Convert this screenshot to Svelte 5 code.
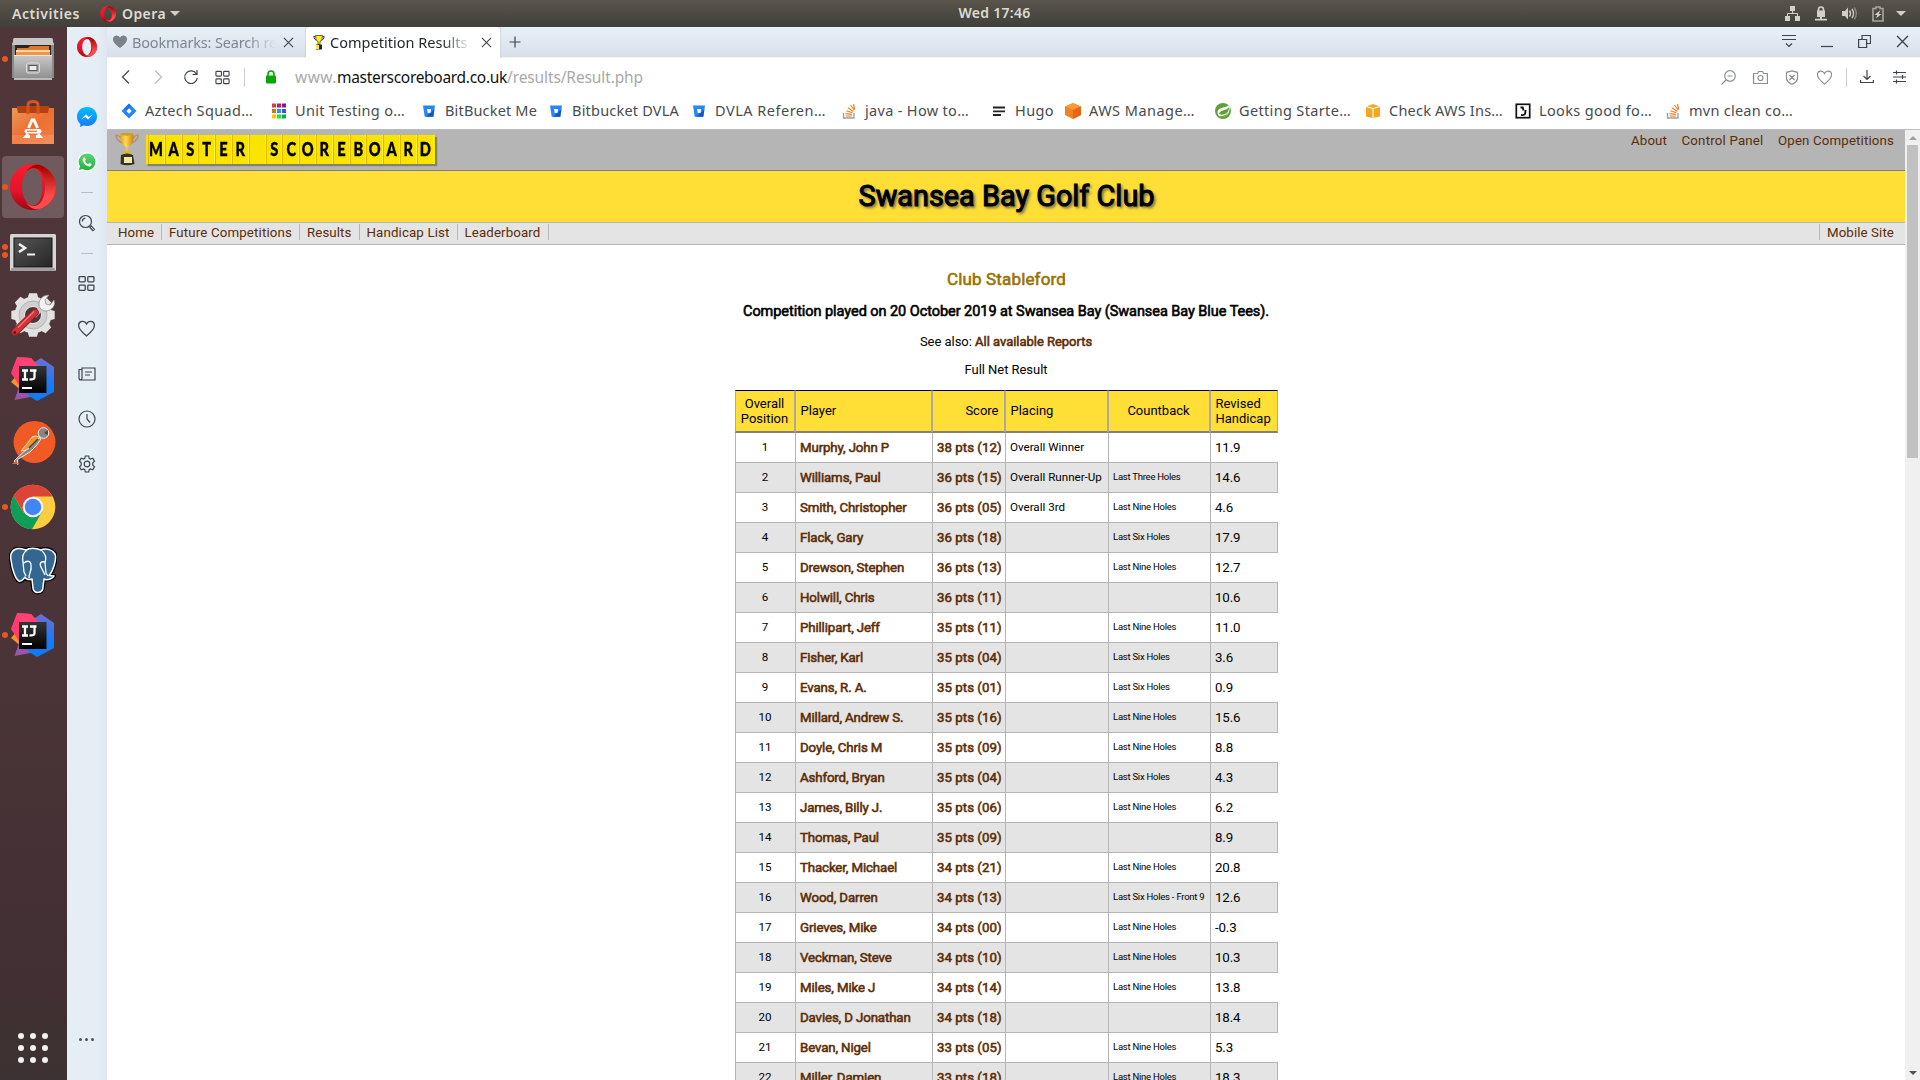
<script>
  // Tracks a label out or in so that it fills its given width.
  function fit(node, width) {
    const natural = node.getBoundingClientRect().width;
    const count = node.textContent.length;
    if (count > 0) node.style.letterSpacing = `${(width - natural) / count}px`;
  }

  const dock = [
    { icon: 'files', dots: 1 },
    { icon: 'store', dots: 0 },
    { icon: 'opera', dots: 1, active: true },
    { icon: 'terminal', dots: 2 },
    { icon: 'settings', dots: 0 },
    { icon: 'idea', dots: 0 },
    { icon: 'postman', dots: 0 },
    { icon: 'chrome', dots: 1 },
    { icon: 'postgres', dots: 0 },
    { icon: 'idea', dots: 1 }
  ];

  const bookmarks = [
    { icon: 'jira', label: 'Aztech Squad…', slot: 150, text: 108 },
    { icon: 'tiles', label: 'Unit Testing o…', slot: 150, text: 110 },
    { icon: 'bucket', label: 'BitBucket Me', slot: 127, text: 92 },
    { icon: 'bucket', label: 'Bitbucket DVLA', slot: 143, text: 107 },
    { icon: 'bucket', label: 'DVLA Referen…', slot: 150, text: 111 },
    { icon: 'stack', label: 'java - How to…', slot: 150, text: 104 },
    { icon: 'hugo', label: 'Hugo', slot: 74, text: 39 },
    { icon: 'aws', label: 'AWS Manage…', slot: 150, text: 106 },
    { icon: 'spring', label: 'Getting Starte…', slot: 150, text: 112 },
    { icon: 'box', label: 'Check AWS Ins…', slot: 150, text: 114 },
    { icon: 'looks', label: 'Looks good fo…', slot: 150, text: 113 },
    { icon: 'stack', label: 'mvn clean co…', slot: 150, text: 104 }
  ];

  const nav = [
    ['Home', 36],
    ['Future Competitions', 123],
    ['Results', 44.5],
    ['Handicap List', 83],
    ['Leaderboard', 76]
  ];

  const nine = 'Last Nine Holes';
  const six = 'Last Six Holes';
  const rows = [
    ['Murphy, John P', '38 pts (12)', 'Overall Winner', '', '11.9'],
    ['Williams, Paul', '36 pts (15)', 'Overall Runner-Up', 'Last Three Holes', '14.6'],
    ['Smith, Christopher', '36 pts (05)', 'Overall 3rd', nine, '4.6'],
    ['Flack, Gary', '36 pts (18)', '', six, '17.9'],
    ['Drewson, Stephen', '36 pts (13)', '', nine, '12.7'],
    ['Holwill, Chris', '36 pts (11)', '', '', '10.6'],
    ['Phillipart, Jeff', '35 pts (11)', '', nine, '11.0'],
    ['Fisher, Karl', '35 pts (04)', '', six, '3.6'],
    ['Evans, R. A.', '35 pts (01)', '', six, '0.9'],
    ['Millard, Andrew S.', '35 pts (16)', '', nine, '15.6'],
    ['Doyle, Chris M', '35 pts (09)', '', nine, '8.8'],
    ['Ashford, Bryan', '35 pts (04)', '', six, '4.3'],
    ['James, Billy J.', '35 pts (06)', '', nine, '6.2'],
    ['Thomas, Paul', '35 pts (09)', '', '', '8.9'],
    ['Thacker, Michael', '34 pts (21)', '', nine, '20.8'],
    ['Wood, Darren', '34 pts (13)', '', 'Last Six Holes - Front 9', '12.6'],
    ['Grieves, Mike', '34 pts (00)', '', nine, '-0.3'],
    ['Veckman, Steve', '34 pts (10)', '', nine, '10.3'],
    ['Miles, Mike J', '34 pts (14)', '', nine, '13.8'],
    ['Davies, D Jonathan', '34 pts (18)', '', '', '18.4'],
    ['Bevan, Nigel', '33 pts (05)', '', nine, '5.3'],
    ['Miller, Damien', '33 pts (18)', '', nine, '18.3']
  ];
</script>

<svg class="defs" width="0" height="0" aria-hidden="true">
  <defs>
    <linearGradient id="opA" x1="0" y1="0" x2="0" y2="1"><stop offset="0" stop-color="#ff1b2d" /><stop offset=".6" stop-color="#e0142a" /><stop offset="1" stop-color="#a70014" /></linearGradient>
    <linearGradient id="opB" x1="0" y1="0" x2="0" y2="1"><stop offset="0" stop-color="#9c0000" /><stop offset=".7" stop-color="#ff4b4b" /></linearGradient>
    <linearGradient id="steel" x1="0" y1="0" x2="0" y2="1"><stop offset="0" stop-color="#c9c9c9" /><stop offset="1" stop-color="#8c8c8c" /></linearGradient>
    <linearGradient id="bag" x1="0" y1="0" x2="1" y2="1"><stop offset="0" stop-color="#e99a5c" /><stop offset=".5" stop-color="#ee6e30" /><stop offset="1" stop-color="#f07f45" /></linearGradient>
    <linearGradient id="term" x1="0" y1="0" x2="1" y2="1"><stop offset="0" stop-color="#555" /><stop offset="1" stop-color="#262626" /></linearGradient>
    <linearGradient id="msg" x1="0" y1="0" x2="0" y2="1"><stop offset="0" stop-color="#00bfff" /><stop offset="1" stop-color="#1a76ff" /></linearGradient>
    <linearGradient id="wa" x1="0" y1="0" x2="0" y2="1"><stop offset="0" stop-color="#5fd676" /><stop offset="1" stop-color="#23ae3c" /></linearGradient>
    <linearGradient id="ijBlue" x1="0" y1="0" x2="0" y2="1"><stop offset="0" stop-color="#6b6fd0" /><stop offset=".6" stop-color="#1b7af5" /><stop offset="1" stop-color="#087cfa" /></linearGradient>
    <linearGradient id="ijBlack" x1="0" y1="0" x2="0" y2="1"><stop offset="0" stop-color="#353535" /><stop offset="1" stop-color="#000" /></linearGradient>
    <linearGradient id="gold" x1="0" y1="0" x2="1" y2="0"><stop offset="0" stop-color="#e0a010" /><stop offset=".4" stop-color="#ffd85a" /><stop offset="1" stop-color="#c98508" /></linearGradient>
  </defs>
</svg>

{#snippet opera(size)}
  <svg width={size} height={size} viewBox="0 0 46 46">
    <path fill="url(#opA)" fill-rule="evenodd" d="M23 0C10 0 0 10.300 0 23s10 23 23 23 23-10.300 23-23S36 0 23 0zm0 4.500c5.500 0 9.500 8 9.500 18.500S28.500 41.500 23 41.500 12 33.500 12 23 17 4.500 23 4.500z" />
    <path fill="url(#opB)" d="M15.500 8.500C18 5.500 21 4 24 4c6.500 0 11 8.500 11 19s-4.500 19-11 19c-3 0-6-1.500-8.500-4.500C19 43.500 24 46 29 45.200 39 42.500 46 33.500 46 23S39 3.500 29 .8C24 0 19 2.500 15.500 8.500z" />
  </svg>
{/snippet}

{#snippet gridIcon(size)}
  <svg class="line" width={size} height={size} viewBox="0 0 16 16">
    <rect x="1" y="1.500" width="5.800" height="5" rx=".8" /><rect x="9.200" y="1.500" width="5.800" height="5" rx=".8" />
    <rect x="1" y="9.500" width="5.800" height="5" rx=".8" /><rect x="9.200" y="9.500" width="5.800" height="5" rx=".8" />
  </svg>
{/snippet}

{#snippet heartIcon(size)}
  <svg class="line" width={size} height={size} viewBox="0 0 18 18">
    <path d="M9 16C5 12.800 1.500 10 1.500 6.200c0-2.400 1.700-4 3.700-4C7 2.200 8.300 3.300 9 4.800c.7-1.500 2-2.600 3.800-2.600 2 0 3.700 1.600 3.700 4C16.500 10 13 12.800 9 16z" />
  </svg>
{/snippet}

{#snippet cross(size)}
  <svg class="line" width={size} height={size} viewBox="0 0 12 12"><path d="M1 1l10 10M11 1L1 11" /></svg>
{/snippet}

{#snippet dockIcon(name)}
  {#if name === 'files'}
    <svg width="46" height="46" viewBox="0 0 46 46">
      <path d="M3 4q0-2 2-2h36q2 0 2 2v37H3z" fill="#b9b9b9" /><path d="M2 7h42v35H2z" fill="#8a8a8a" />
      <path d="M4 2h38l2 7H2z" fill="#c7c7c7" /><path d="M5 9h36v10H5z" fill="#2b2522" />
      <path d="M7 12h11l2-2h19v9H7z" fill="#e0762c" /><path d="M6 14h34v2H6z" fill="#ffd9a8" /><path d="M6 16h34v3H6z" fill="#f09445" />
      <path d="M4 19h38v25H4z" fill="url(#steel)" /><path d="M4 19h38v1H4zM4 42.500h38v1H4z" fill="#e6e6e6" />
      <rect x="16.500" y="27" width="13" height="10" rx="2" fill="#aaa" stroke="#dedede" /><rect x="19" y="29.500" width="8" height="5" fill="#eee" stroke="#555" />
    </svg>
  {:else if name === 'store'}
    <svg width="46" height="46" viewBox="0 0 46 46">
      <path d="M2 8l5 0v-2h32v2h5v6H2z" fill="#b44211" /><path d="M2 8h5l1 5h30l1-5h5v36H2z" fill="url(#bag)" />
      <path d="M2 35h42v9H2z" fill="#fff" opacity=".13" />
      <path d="M18 14V5q0-3.500 5-3.500T28 5v9" fill="none" stroke="#d9521c" stroke-width="3" />
      <path d="M18.500 28L22 20h2l3.500 8M18 34l-2 2.500h4M28 34l2 2.500h-4" fill="none" stroke="#fff" stroke-width="3" />
      <rect x="14.500" y="29" width="17" height="4.500" rx="2.200" fill="#fff" /><path d="M17 31.200h10" stroke="#ed7336" stroke-width="1.300" />
    </svg>
  {:else if name === 'opera'}
    {@render opera(46)}
  {:else if name === 'terminal'}
    <svg width="46" height="46" viewBox="0 0 46 46">
      <rect x="0" y="6" width="46" height="37" rx="1.500" fill="#d5d5d5" /><rect x="1" y="40" width="44" height="3" fill="#9f9f9f" />
      <rect x="4" y="10" width="38" height="29" fill="url(#term)" stroke="#111" />
      <path d="M9 16l6 4-6 4" fill="none" stroke="#f2f2f2" stroke-width="2.600" /><path d="M17 26.500h8" stroke="#f2f2f2" stroke-width="2" />
    </svg>
  {:else if name === 'settings'}
    <svg width="46" height="46" viewBox="0 0 46 46">
      <g fill="#e2e2e2">
        {#each [0, 45, 90, 135] as angle}<path d="M18 5L19 1.300h8L28 5v36l-1 3.700h-8L18 41z" transform="rotate({angle} 23 23)" />{/each}
        <circle cx="23" cy="23" r="18.500" />
      </g>
      <circle cx="23" cy="23" r="14" fill="#cfcfcf" stroke="#b4b4b4" /><circle cx="23" cy="23" r="8.500" fill="#4b363a" stroke="#eee" />
      <path d="M24 24L35 12" stroke="#c9c9c9" stroke-width="5" />
      <path d="M29 12c0-5 4-9 10-9l-4 5 1 4 4 1 4-5c2 5-2 11-8 11-3 0-7-2-7-6z" fill="#f1f1f1" stroke="#8d8d8d" stroke-width=".8" />
      <path d="M5 40L25 20.500" stroke="#971a20" stroke-width="7.600" stroke-linecap="round" /><path d="M5 40L25 20.500" stroke="#cf3439" stroke-width="5.800" stroke-linecap="round" />
      <path d="M8 35.500L24 19.500" stroke="#f0787b" stroke-width="1.200" /><circle cx="4.800" cy="40.500" r="1.400" fill="#54151a" />
    </svg>
  {:else if name === 'idea'}
    <svg width="46" height="46" viewBox="0 0 46 46">
      <path d="M1 26L13 12l14 24-9 4z" fill="#f59325" /><path d="M4.500 44L12 22l24 16z" fill="#9a56a8" />
      <path d="M1 17L7 1l14 1 12 13-20 20z" fill="#ff3c70" /><path d="M16 12l15-10 13 9v25L27 45 13 36z" fill="url(#ijBlue)" />
      <path d="M7 1l14 1 9 10H10z" fill="#ff4175" /><rect x="9" y="10" width="27.500" height="27" fill="url(#ijBlack)" />
      <path d="M12 14.500h6M12 23.500h6M15 14v10M20 14.500h6.500M24.500 14v7q0 3-5 2.300" fill="none" stroke="#fff" stroke-width="2.300" /><path d="M12 32h10" stroke="#fff" stroke-width="2" />
    </svg>
  {:else if name === 'postman'}
    <svg width="46" height="46" viewBox="0 0 46 46">
      <circle cx="24.500" cy="22" r="21" fill="#f15a24" />
      <path d="M30 17q-5-2-8 0l-6 8-5 6 6-1z" fill="#f7931e" stroke="#ffe4cf" /><path d="M30 17.500l-9 9-7 5L4 41l4 3.500-.5-5L20 32l6-6 5-7z" fill="#8b8b8b" stroke="#e8e8e8" />
      <path d="M19 28l9-9" stroke="#414141" stroke-width="1.600" /><circle cx="33.500" cy="13" r="5.300" fill="#868686" stroke="#ececec" /><path d="M34 13l4-3v5z" fill="#4a4a4a" />
      <path d="M1.500 44l4.500-3 2 3z" fill="#f15a24" />
    </svg>
  {:else if name === 'chrome'}
    <svg width="46" height="46" viewBox="0 0 46 46">
      <circle cx="23" cy="23" r="22.300" fill="#ffcd40" />
      <path d="M42.600 12.500H23L14 18.500 3.700 11.850A22.300 22.300 0 0 1 42.600 12.500z" fill="#db4437" />
      <path d="M3.700 11.850A22.300 22.300 0 0 0 22 45.300L32.500 27 23 33 13.500 28.500z" fill="#0f9d58" />
      <path d="M3.700 11.850L14 29l9-6V12.500H8z" fill="#db4437" />
      <circle cx="23" cy="23" r="10.300" fill="#f4f4f4" /><circle cx="23" cy="23" r="8.200" fill="#4285f4" />
    </svg>
  {:else if name === 'postgres'}
    <svg class="elephant" width="48" height="48" viewBox="0 0 48 48">
      <g stroke-linejoin="round">
        <path d="M17 3C8-1 0 3 2 13c1 8 4 19 8 21 3 1 5-3 6-4 1 3 5 3 7 2l1 9c0 6 10 6 10-1l1-8c4 2 9-1 10-3l-5-.5C44 24 48 12 46 7 43 2 36 1 32 3c-5-2-10-3-15 0z" fill="#336791" stroke="#000" stroke-width="4" />
        <path d="M17 3C8-1 0 3 2 13c1 8 4 19 8 21 3 1 5-3 6-4 1 3 5 3 7 2l1 9c0 6 10 6 10-1l1-8c4 2 9-1 10-3l-5-.5C44 24 48 12 46 7 43 2 36 1 32 3c-5-2-10-3-15 0z" fill="#336791" stroke="#fff" stroke-width="1.500" />
        <path d="M18 3c-4 3-5 8-4 12l1 10 2 4M32 3c4 3 6 7 4 13l1 10 2 3M15 16c3-3 7-2 7 2 1 6-2 7-2 13M36 15c-4-1-6 1-4 5l4 8" fill="none" stroke="#fff" stroke-width="1.300" />
      </g>
    </svg>
  {/if}
{/snippet}

{#snippet mark(name)}
  <svg width="16" height="16" viewBox="0 0 16 16">
    {#if name === 'jira'}
      <path d="M8 .5L15.500 8 8 15.500.5 8z" fill="#2684ff" /><path d="M8 5.300L10.700 8 8 10.700 5.300 8z" fill="#fff" /><path d="M8 .5l2.500 2.500Q8.500 4 8 5.300L5.300 8 3 5.500z" fill="#1868e0" opacity=".6" />
    {:else if name === 'tiles'}
      <path d="M1 .5h4v4H1z" fill="#e03a3a" /><path d="M6 .5h4v4H6z" fill="#cc0f73" /><path d="M11 .5h4v4h-4z" fill="#7b14b8" />
      <path d="M1 6h4v4H1z" fill="#c97816" /><path d="M6 6h4v4H6z" fill="#1ba0d6" /><path d="M11 6h4v4h-4z" fill="#4152e0" />
      <path d="M1 11.500h4v4H1z" fill="#ffc20a" /><path d="M6 11.500h4v4H6z" fill="#2fe01f" /><path d="M11 11.500h4v4h-4z" fill="#0fa958" />
    {:else if name === 'bucket'}
      <path d="M2 2.500h12l-1.700 11.300H3.700z" fill="#2684ff" /><path d="M13.400 6.500l-1.100 7.300H5l4.500-4z" fill="#0a56d0" /><path d="M6 6h4.200l-.7 4H6.700z" fill="#fff" />
    {:else if name === 'stack'}
      <path d="M2.500 10v5h10.500v-5" fill="none" stroke="#9b9ea2" stroke-width="1.300" /><path d="M4.500 13h6.500M4.500 10.700l6.400.7M5.300 7.800l6.100 2M7 4.800l5.300 3.600M9.500 2l3.800 5M12.500 1l1.200 5.500" fill="none" stroke="#f48024" stroke-width="1.200" />
    {:else if name === 'hugo'}
      <path d="M2 4.500h12M2 8.300h12M2 12h8" stroke="#222" stroke-width="1.800" />
    {:else if name === 'aws'}
      <path d="M8 0l8 3.500V12l-8 4-8-4V3.500z" fill="#f58220" /><path d="M0 3.500L8 0l8 3.500L8 7z" fill="#fb9c38" /><path d="M8 7l8-3.500V12l-8 4z" fill="#e8641b" />
    {:else if name === 'spring'}
      <circle cx="8" cy="8" r="8" fill="#5fa134" /><path d="M14.500 1.500C13 5 2.500 3.500 2.500 9c0 2.500 1.500 4 1.500 4 6 2 12-1 10.500-11.500z" fill="#fff" /><path d="M14 4C12 8 5 6.500 4 11c4 2 10.500-.5 10-7zM4 13.300c4 0 7-1 9-4-1 4-5 5.700-9 4z" fill="#5fa134" />
    {:else if name === 'box'}
      <path d="M1 3.500L8 1l7 2.500v10L8 15l-7-1.500z" fill="#f0a81f" /><path d="M1 3.500l7 2 7-2M8 5.500V15" fill="none" stroke="#fff" stroke-width="1.100" />
    {:else if name === 'looks'}
      <rect x="1.300" y="1.300" width="13.400" height="13.400" fill="#fff" stroke="#111" stroke-width="1.700" /><path d="M5.500 4.500h2.200l.8 3M10.500 7l-.3 3.500q-.7 2-4.200 1.500" fill="none" stroke="#111" stroke-width="1.900" />
    {/if}
  </svg>
{/snippet}

<div class="desktop">
  <header class="topbar">
    <div class="left">
      <span class="activities"><span use:fit={68}>Activities</span></span>
      {@render opera(16)}
      <span class="app"><span use:fit={44}>Opera</span></span>
      <i class="caret"></i>
    </div>
    <span class="clock"><span use:fit={72}>Wed 17:46</span></span>
    <div class="tray">
      <svg width="15" height="15" viewBox="0 0 15 15"><path d="M5 0h5v5H5zM0 10h5v5H0zM10 10h5v5h-5z" fill="#d3d0c9" /><path d="M7.500 5v3M2.500 10V7.500h10V10" fill="none" stroke="#d3d0c9" /></svg>
      <svg width="12" height="15" viewBox="0 0 12 15"><path d="M3.500 5V3.500a2.500 2.500 0 0 1 5 0V5" fill="none" stroke="#d3d0c9" stroke-width="1.700" /><path d="M2 4.500h8V11H2zM5 11h2v2H5zM0 12.700h12V14.500H0z" fill="#d3d0c9" /></svg>
      <svg width="15" height="15" viewBox="0 0 15 15"><path d="M0 5h3l3-3.500v12L3 10H0z" fill="#d3d0c9" /><path d="M7.500 4.500q2 3 0 6M10 3q3 4.500 0 9" fill="none" stroke="#d3d0c9" stroke-width="1.400" /><path d="M12.300 1.500q4 6 0 12" fill="none" stroke="#8b8880" stroke-width="1.400" /></svg>
      <svg width="12" height="16" viewBox="0 0 12 16"><path d="M1 2.500h3V1h4v1.500h3v12.500H1z" fill="none" stroke="#aaa79f" stroke-width="1.600" /><path d="M8.500 4L2.500 9h2.800L4 12.500 9.500 8H6.700z" fill="#d3d0c9" /></svg>
      <i class="caret"></i>
    </div>
  </header>

  <div class="workspace">
    <aside class="dock">
      {#each dock as item}
        <div class="launcher" class:active={item.active}>
          <div class="dots">{#each Array(item.dots) as _}<i></i>{/each}</div>
          {@render dockIcon(item.icon)}
        </div>
      {/each}
      <div class="apps">{#each Array(9) as _}<i></i>{/each}</div>
    </aside>

    <nav class="sidebar">
      <div class="slot top">{@render opera(20)}</div>
      <div class="slot">
        <svg width="20" height="20" viewBox="0 0 20 20"><path d="M10 0C4.200 0 0 4.200 0 9.700c0 3 1.300 5.500 3.300 7.200V20l3.100-1.500c1.100.3 2.300.5 3.600.5 5.800 0 10-4.200 10-9.500S15.800 0 10 0z" fill="url(#msg)" /><path d="M4 12.500l5-5.200 2.600 2.600L16 7.300l-5 5.200L8.400 10z" fill="#fff" /></svg>
      </div>
      <div class="slot">
        <svg width="20" height="20" viewBox="0 0 20 20"><path d="M10.200.8A9 9 0 0 0 2.300 14.300L1 19l4.800-1.300A9 9 0 1 0 10.200.8z" fill="url(#wa)" stroke="#fff" stroke-width="1.300" /><path d="M6.200 6c.7-1.200 1.500-1 1.900-.1l.7 1.700-.9 1.300c.8 1.600 1.800 2.500 3.400 3.200l1.100-1.200 2.200 1c.3 1.500-1 2.600-2.500 2.500C8.500 13.800 5.500 10.500 5.700 7.600z" fill="#fff" /></svg>
      </div>
      <hr />
      <div class="slot"><svg class="line" width="18" height="18" viewBox="0 0 18 18"><circle cx="7.500" cy="7.500" r="6" /><path d="M4.300 7.500q0-3 3-3.300" /><path d="M12 12l4 4.500" stroke-width="3.200" /><path d="M12.700 12.700l3 3.200" stroke="#e5ecf5" stroke-width="1" /></svg></div>
      <hr />
      <div class="slot">{@render gridIcon(17)}</div>
      <div class="slot">{@render heartIcon(19)}</div>
      <div class="slot"><svg class="line" width="18" height="16" viewBox="0 0 18 16"><path d="M4 3.500H1V12q0 2 2 2h14V2H4v10q0 2-1.500 2M7 6h7M7 9h5" /></svg></div>
      <div class="slot"><svg class="line" width="18" height="18" viewBox="0 0 18 18"><circle cx="9" cy="9" r="8" /><path d="M9 4v5l3 3.500" /></svg></div>
      <div class="slot"><svg class="line" width="18" height="18" viewBox="0 0 18 18"><circle cx="9" cy="9" r="2.800" /><path d="M7.300 1h3.400l.5 2.300 1.300.8 2.300-.8 1.700 2.900L14.800 7.800v2.400l1.700 1.600-1.700 2.900-2.300-.8-1.300.8-.5 2.300H7.300l-.5-2.300-1.300-.8-2.300.8-1.700-2.900 1.700-1.600V7.800L1.500 6.200l1.700-2.900 2.300.8 1.300-.8z" /></svg></div>
      <div class="more"><i></i><i></i><i></i></div>
    </nav>

    <main class="browser">
      <div class="tabs">
        <div class="tab">
          <svg width="14" height="14" viewBox="0 0 14 14"><path d="M7 13C3 10 0 7.500 0 4 0 1.800 1.600.5 3.500.5 5 .5 6.300 1.300 7 2.700 7.700 1.300 9 .5 10.500.5 12.400.5 14 1.800 14 4c0 3.500-3 6-7 9z" fill="#7d8288" /></svg>
          <span class="title"><span use:fit={145}>Bookmarks: Search re</span></span>
          {@render cross(11)}
        </div>
        <div class="tab current">
          <svg width="12" height="15" viewBox="0 0 12 15"><path d="M2.500 1.500H.8q0 3 3 4M9.500 1.500h1.700q0 3-3 4" fill="none" stroke="#222" stroke-width=".9" /><path d="M2.500.5h7Q9.500 5 7 7v2.500H5V7Q2.500 5 2.500.5z" fill="#ffee1c" stroke="#444" stroke-width=".8" /><path d="M3 9.500h6v5H3z" fill="#222" /><path d="M3 10h3v4H3z" fill="#ffee1c" /></svg>
          <span class="title"><span use:fit={146}>Competition Results -</span></span>
          {@render cross(11)}
        </div>
        <svg class="line plus" width="12" height="12" viewBox="0 0 12 12"><path d="M6 .5v11M.5 6h11" /></svg>
        <div class="window">
          <svg class="line" width="14" height="14" viewBox="0 0 14 14"><path d="M0 1.500h14M0 5.500h14M4 9.500l3 3 3-3" /></svg>
          <svg class="line" width="12" height="14" viewBox="0 0 12 14"><path d="M0 12.500h12" /></svg>
          <svg class="line" width="13" height="13" viewBox="0 0 13 13"><path d="M.6 4.500h8v8h-8zM4 4.500v-4h8.500v8H8.600" /></svg>
          {@render cross(13)}
        </div>
      </div>

      <div class="address">
        <svg class="line" width="10" height="16" viewBox="0 0 10 16"><path d="M8 1.500L1.500 8 8 14.500" /></svg>
        <svg class="line dim" width="10" height="16" viewBox="0 0 10 16"><path d="M2 1.500L8.500 8 2 14.500" /></svg>
        <svg class="line" width="16" height="16" viewBox="0 0 16 16"><path d="M13.500 5A6.300 6.300 0 1 0 14.300 9M14 1v4.500H9.500" /></svg>
        {@render gridIcon(15)}
        <i class="rule"></i>
        <svg class="lock" width="12" height="14" viewBox="0 0 12 14"><path d="M3 6V4a3 3 0 0 1 6 0v2" fill="none" stroke="#00a800" stroke-width="1.600" /><rect x="1" y="5.500" width="10" height="8" rx="1" fill="#00a800" /></svg>
        <p class="url"><span use:fit={42}>www.</span><b use:fit={170}>masterscoreboard.co.uk</b><span use:fit={136}>/results/Result.php</span></p>
        <div class="tools">
          <svg class="line soft" width="15" height="15" viewBox="0 0 15 15"><circle cx="9" cy="6" r="5.300" /><path d="M5 10l-4.500 4.500M6.500 6h5" /></svg>
          <svg class="line soft" width="15" height="15" viewBox="0 0 15 15"><path d="M.6 3.500h4l1-2h4l1 2h3.800v10H.6z" /><circle cx="7.500" cy="8" r="2.500" /></svg>
          <svg class="line soft" width="14" height="15" viewBox="0 0 14 15"><path d="M7 .8l5.500 1.500v7Q11 13 7 14.300 3 13 1.500 9.300v-7zM4.500 5l5 5M9.500 5l-5 5" /></svg>
          <span class="soft">{@render heartIcon(17)}</span>
          <i class="rule"></i>
          <svg class="line" width="14" height="14" viewBox="0 0 14 14"><path d="M7 0v9.500M3.500 6L7 9.500 10.500 6M.6 10v2.500h12.800V10" /></svg>
          <svg class="line" width="13" height="14" viewBox="0 0 13 14"><path d="M0 2.500h13M0 7h13M0 11.500h13M3.500.5v4M9.500 5v4M3.500 9.500v4" /></svg>
        </div>
      </div>

      <div class="bookmarks">
        {#each bookmarks as b}
          <a class="bookmark" style:width="{b.slot}px">{@render mark(b.icon)}<span use:fit={b.text}>{b.label}</span></a>
        {/each}
      </div>

      <div class="viewport">
        <div class="page">
          <div class="brand">
            <svg width="24" height="34" viewBox="0 0 24 34">
              <path d="M6 6Q1 1 .8 4q1 5 8.500 8M18 6q5-5 5.200-2-1 5-8.500 8" fill="none" stroke="#c08a68" stroke-width="1.300" />
              <path d="M5.500 2h13q1 8-4 12l-2 2v4h-1v-4l-2-2q-5-4-4-12z" fill="url(#gold)" /><ellipse cx="12" cy="2.300" rx="6.500" ry="1.400" fill="#d29a20" />
              <path d="M7 22q1-3 5-3t5 3z" fill="#e8b912" /><path d="M6 23q6-3 12 0l1.500 9q-7.500 2.500-14 0z" fill="#35322a" /><rect x="9" y="25" width="8" height="6" fill="#f3e8a0" />
            </svg>
            <div class="board">{#each 'MASTER SCOREBOARD'.split('') as letter}<span><em>{letter}</em></span>{/each}</div>
            <div class="links"><a use:fit={36}>About</a><a use:fit={82}>Control Panel</a><a use:fit={116}>Open Competitions</a></div>
          </div>
          <div class="club"><h1 use:fit={296}>Swansea Bay Golf Club</h1></div>
          <div class="menu">
            {#each nav as [label, w]}<a><span use:fit={w}>{label}</span></a>{/each}
            <a class="mobile"><span use:fit={67}>Mobile Site</span></a>
          </div>

          <section class="content">
            <h2><span use:fit={119}>Club Stableford</span></h2>
            <h3><span use:fit={526}>Competition played on 20 October 2019 at Swansea Bay (Swansea Bay Blue Tees).</span></h3>
            <p><span use:fit={52}>See also:</span>&nbsp;<a class="strong" use:fit={117}>All available Reports</a></p>
            <p><span use:fit={83}>Full Net Result</span></p>
            <table>
              <colgroup><col class="c1" /><col class="c2" /><col class="c3" /><col class="c4" /><col class="c5" /><col class="c6" /></colgroup>
              <thead>
                <tr><th class="mid">Overall<br />Position</th><th class="one">Player</th><th class="one end">Score</th><th class="one">Placing</th><th class="one mid">Countback</th><th>Revised<br />Handicap</th></tr>
              </thead>
              <tbody>
                {#each rows as [player, score, placing, countback, handicap], i}
                  <tr>
                    <td class="small mid">{i + 1}</td>
                    <td class="strong name">{player}</td>
                    <td class="strong name"><span use:fit={63}>{score}</span></td>
                    <td class="small">{placing}</td>
                    <td class="tiny">{countback}</td>
                    <td class="name">{handicap}</td>
                  </tr>
                {/each}
              </tbody>
            </table>
          </section>
        </div>
        <div class="scrollbar"><i class="up"></i><div class="thumb"></div><i class="down"></i></div>
      </div>
    </main>
  </div>
</div>

<style>
  :global(body) { margin: 0; overflow: hidden; }
  .defs { position: absolute; }
  svg { display: block; flex: none; }
  i { display: block; }
  span, b { white-space: nowrap; }
  .desktop { width: 1920px; height: 1080px; overflow: hidden; display: flex; flex-direction: column; font-family: "Noto Sans", "Open Sans", sans-serif; }
  .line { fill: none; stroke: #3c444c; stroke-width: 1.2; }
  .soft.line, .soft .line { stroke: #8c9094; }

  .topbar { flex: none; height: 27px; box-sizing: border-box; display: grid; grid-template-columns: 1fr auto 1fr; align-items: center; padding: 0 14px 0 12px; background: linear-gradient(#59554c, #403f3a); color: #dfdbd2; font-size: 14px; font-weight: 600; }
  .topbar .left { display: flex; align-items: center; }
  .activities { width: 88px; }
  .app { width: 48px; margin-left: 6px; }
  .clock { margin-left: 71px; padding-bottom: 2px; }
  .caret { border: 5px solid transparent; border-top-color: #d3d0c9; border-bottom: 0; }
  .tray { display: flex; align-items: center; justify-content: flex-end; gap: 15px; }
  .topbar .tray .caret { margin-left: -3px; }

  .workspace { flex: 1; min-height: 0; display: flex; }
  .dock { width: 67px; flex: none; display: flex; flex-direction: column; background: linear-gradient(#503639, #4a3438 60%, #422f33 91%, #3e3132 95%, #3d3233); }
  .launcher { height: 62px; width: 62px; margin: 1px 2px; flex: none; display: flex; align-items: center; border-radius: 4px; }
  .launcher.active { background: #6f5a5e; }
  .launcher :global(svg) { margin-left: 2px; }
  .launcher :global(svg.elephant) { margin-left: 1px; }
  .dots { width: 6px; display: flex; flex-direction: column; gap: 2px; }
  .dots i { width: 6px; height: 6px; border-radius: 50%; background: #e95420; }
  .apps { margin: auto 0 17px 18px; display: grid; grid-template-columns: repeat(3, 6px); gap: 6px; }
  .apps i { width: 6px; height: 6px; border-radius: 50%; background: #f2f1f0; }

  .sidebar { width: 40px; flex: none; box-sizing: border-box; padding-right: 1px; display: flex; flex-direction: column; background: linear-gradient(90deg, #e5edf5 75%, #dfe6f0); }
  .slot { height: 45px; flex: none; display: flex; align-items: center; justify-content: center; }
  .slot.top { height: 40px; margin-bottom: 27px; }
  .sidebar hr { width: 12px; height: 1px; margin: 8px auto 7px; border: 0; background: #b4bfca; flex: none; }
  .more { margin: auto auto 39px; display: flex; gap: 3px; }
  .more i { width: 3px; height: 3px; border-radius: 50%; background: #4b545d; }

  .browser { flex: 1; min-width: 0; display: flex; flex-direction: column; background: #fff; }
  .tabs { height: 31px; flex: none; box-sizing: border-box; border-bottom: 1px solid #eef2f6; display: flex; align-items: center; background: linear-gradient(#e5edf5 20%, #d9dfe9); font-size: 14.500px; color: #7b8794; }
  .tab { width: 199px; height: 30px; box-sizing: border-box; padding: 0 12px 0 6px; display: flex; align-items: center; }
  .tab .title { flex: 1; margin: 0 7px 0 5px; padding-bottom: 1px; overflow: hidden; -webkit-mask-image: linear-gradient(90deg, #000 80%, transparent); }
  .tab.current { width: 194px; height: 31px; padding: 0 8px 0 7px; background: #fff; color: #24282d; border-radius: 3px 3px 0 0; box-shadow: 0 0 2px #aab4c0; clip-path: inset(0 -3px 0 -3px); align-self: flex-start; }
  .tab.current .title { margin-left: 5px; margin-right: 10px; }
  .plus { margin-left: 9px; }
  .window { margin-left: auto; margin-right: 11px; padding-bottom: 2px; display: flex; align-items: center; gap: 25px; }

  .address { height: 38px; flex: none; display: flex; align-items: center; padding-left: 14px; }
  .address > .line { margin-right: 22px; }
  .address > .line:nth-child(3) { margin-left: -2px; margin-right: 16px; }
  .address > .line:nth-child(4) { margin-right: 14px; }
  .line.dim { stroke: #b6babe; }
  .rule { width: 1px; height: 19px; background: #ccc; }
  .lock { margin-left: 20px; }
  .url { margin: 0 0 0 18px; display: flex; font-size: 15.500px; color: #a9a9a9; }
  .url b { font-weight: 400; color: #111; }
  .tools { margin-left: auto; padding-right: 14px; display: flex; align-items: center; gap: 17px; }
  .tools .rule { margin: 0 -4px 0 -4px; }
  .tools > :last-child { margin-left: 2px; }

  .bookmarks { height: 34px; flex: none; box-sizing: border-box; border-bottom: 1px solid #b5bec7; padding: 0 0 3px 14px; display: flex; align-items: center; font-size: 14.500px; color: #484b50; }
  .bookmark { flex: none; display: flex; align-items: center; gap: 8px; }
  .bookmark span { padding-bottom: 2px; }

  .viewport { flex: 1; min-height: 0; display: flex; }
  .page { flex: 1; min-width: 0; overflow: hidden; font-family: Roboto, sans-serif; font-size: 13.300px; color: #000; background: #fff; }
  .brand { height: 41px; box-sizing: border-box; border-bottom: 1px solid #808080; background: #b5b5b5; display: flex; padding: 2px 11px 0 8px; }
  .board { display: flex; width: 289px; box-sizing: border-box; padding: 0 2px; height: 29px; margin: 3px 0 0 7px; background: #fbe300; box-shadow: 2px 2px 1px #84826a; font: 900 19px/28px Lato, sans-serif; }
  .board span { width: 16.800px; flex: none; display: flex; justify-content: center; box-sizing: border-box; border-left: 1px solid #e5b800; border-right: 1px solid #fff04a; }
  .board em { font-style: normal; transform: scaleX(.77); -webkit-text-stroke: .400px #000; }
  .links { margin-left: auto; display: flex; gap: 14.500px; line-height: 17px; color: #5c2c05; }
  .club { height: 52px; box-sizing: border-box; padding: 0 0 2px 1px; border-bottom: 1px solid #b5b5b5; background: #ffde35; display: flex; align-items: center; justify-content: center; }
  h1, h2, h3, p { margin: 0; }
  h1 { font-size: 28.800px; line-height: 48px; font-weight: 400; -webkit-text-stroke: 1.100px #000; text-shadow: 2px 2px 3px #555; white-space: nowrap; }
  .menu { height: 22px; box-sizing: border-box; border-bottom: 1px solid #b5b5b5; background: #e4e4e4; display: flex; padding: 1px 11px 0 4px; }
  .menu a { height: 16px; line-height: 17px; padding: 0 7px; border-right: 1px solid #b5b5b5; color: #5c2c05; }
  .menu .mobile { margin-left: auto; border-right: 0; border-left: 1px solid #b5b5b5; padding-right: 0; }

  .content { padding-top: 20px; display: flex; flex-direction: column; align-items: center; font-size: 13px; }
  .content > * { line-height: 28px; }
  h2 { padding-left: 1px; font-size: 17px; font-weight: 400; color: #997300; -webkit-text-stroke: .600px #997300; }
  h3 { margin: 5px 0 2px; font-size: 14.500px; font-weight: 400; -webkit-text-stroke: .600px #000; }
  .strong { color: #5c2c05; -webkit-text-stroke: .550px #5c2c05; }
  table { width: 543px; margin-top: 6px; table-layout: fixed; border-collapse: separate; border-spacing: 0; }
  .c1 { width: 60px; } .c2 { width: 137px; } .c3 { width: 73px; } .c4 { width: 103px; } .c5 { width: 102px; } .c6 { width: 68px; }
  th { height: 43px; box-sizing: border-box; padding: 0 5px; text-align: left; font-weight: 400; line-height: 15px; background: #ffde35; border-top: 1px solid #000; border-bottom: 2px solid #808080; border-right: 1px solid #a9a9a9; border-left: 1px solid #a9a9a9; }
  th.one { padding-bottom: 2px; }
  td { height: 30px; box-sizing: border-box; padding: 0 0 0 4.500px; line-height: 20px; border-left: 1px solid #b5b5b5; border-bottom: 1px solid #b5b5b5; white-space: nowrap; }
  tr:nth-child(even) td { background: #e4e4e4; }
  tr:nth-child(even) td:last-child { border-right: 1px solid #b5b5b5; }
  .mid { text-align: center; }
  td.mid { padding-left: 0; }
  .end { text-align: right; padding-right: 5px; }
  .name { font-size: 13.300px; letter-spacing: -.140px; }
  .small { font-size: 11.600px; padding-bottom: 1px; }
  .tiny { font-size: 9.500px; letter-spacing: -.240px; padding-bottom: 2px; }

  .scrollbar { width: 15px; display: flex; flex-direction: column; align-items: center; background: #f0f0f0; }
  .up { margin: 6px 0 5px; border: 4px solid transparent; border-bottom-color: #a0a0a0; border-top: 0; }
  .thumb { width: 11px; height: 313px; background: #c1c1c1; }
  .down { margin: auto 0 5px; border: 4px solid transparent; border-top-color: #505050; border-bottom: 0; }
</style>
